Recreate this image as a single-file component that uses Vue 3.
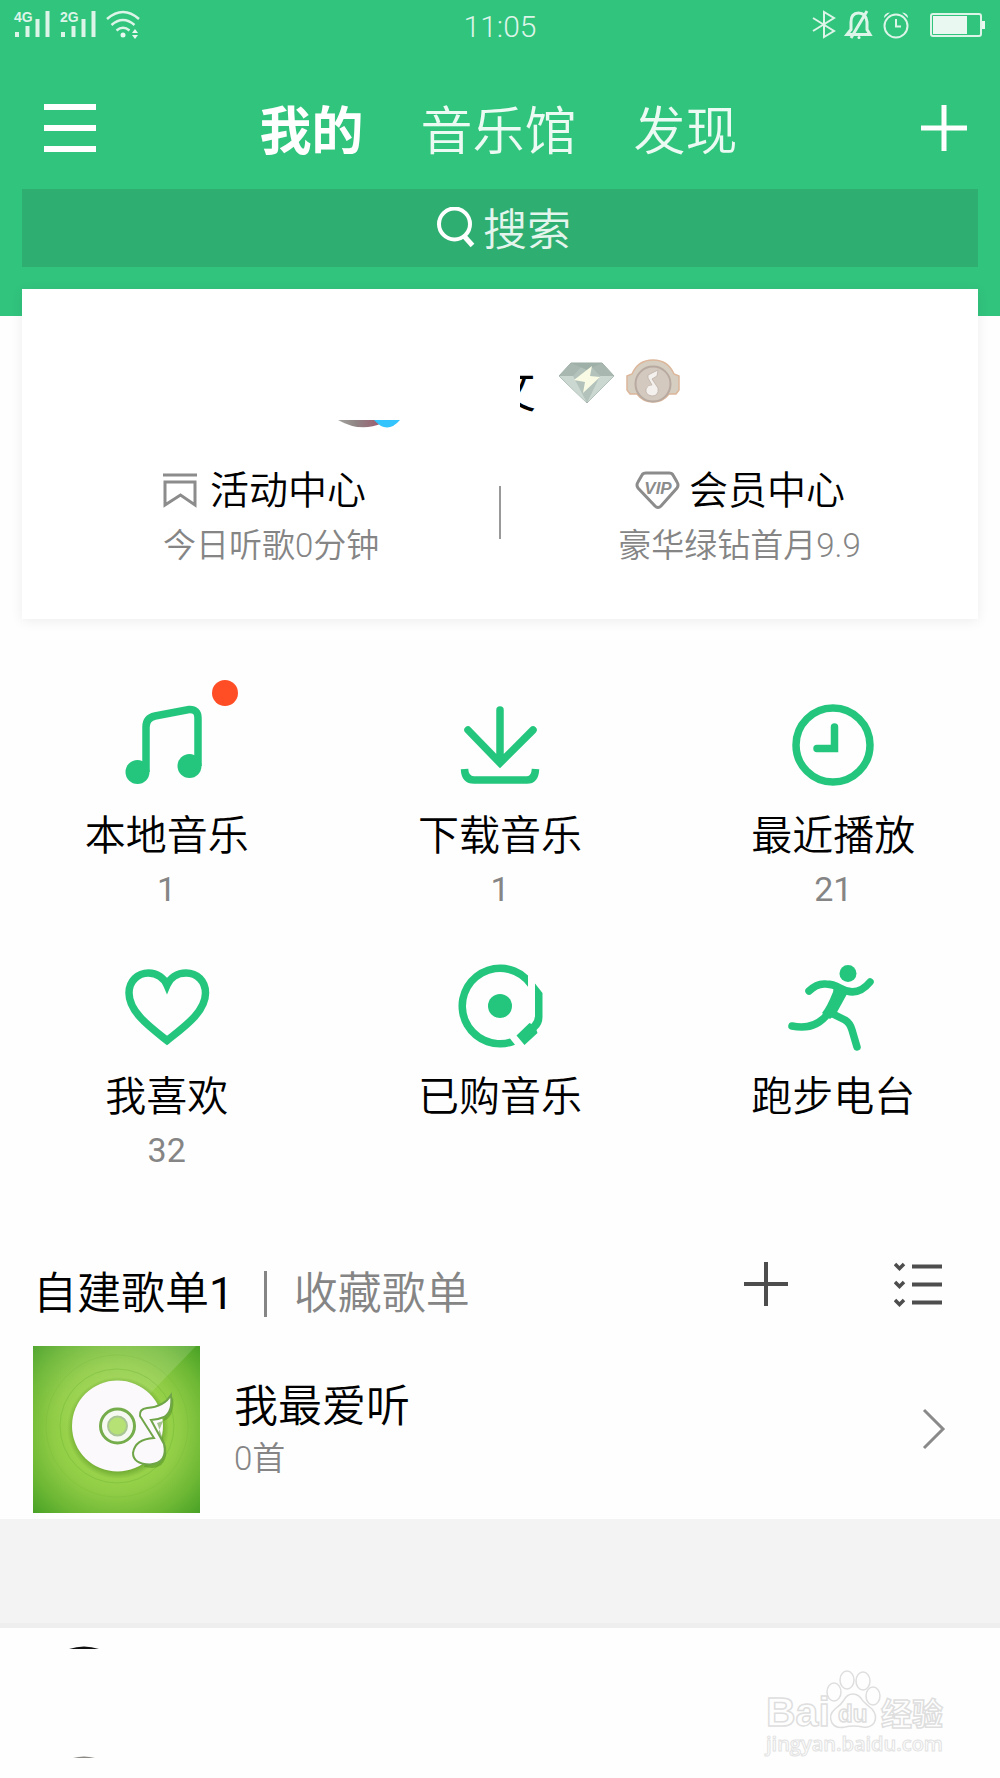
<script setup>
import { ref } from 'vue'

const tabs = ['我的', '音乐馆', '发现']
const activeTab = ref('我的')
const query = ref('')

const entries = [
  { id: 'local', label: '本地音乐', count: '1', dot: true },
  { id: 'download', label: '下载音乐', count: '1' },
  { id: 'recent', label: '最近播放', count: '21' },
  { id: 'like', label: '我喜欢', count: '32' },
  { id: 'bought', label: '已购音乐', count: '' },
  { id: 'run', label: '跑步电台', count: '' },
]

const signals = ['4G', '2G']
</script>

<template>
  <div class="page">
    <header class="top">
      <div class="status">
        <div class="status-side">
          <svg v-for="s in signals" :key="s" class="signal" width="37" height="28" viewBox="0 0 37 28">
            <text x="0" y="11" class="signal-text">{{ s }}</text>
            <path d="M3 21v5M13.500 15v11M23.500 8v18M33.500 0v26" />
          </svg>
          <svg class="wifi" width="36" height="28" viewBox="0 0 36 28">
            <path d="M1 8Q17 -6 33 8M5.500 14Q17 4 28.500 14M10.500 19.500Q17 14 23.500 19.500" />
            <circle cx="17" cy="24" r="2.500" class="solid" />
            <path d="M26 22l3-4 3 4zM26 24l3 4 3-4z" class="solid" />
          </svg>
        </div>
        <time class="clock">11:05</time>
        <div class="status-side status-right">
          <svg width="24" height="28" viewBox="0 0 24 28" class="thin">
            <path d="M1 7l21 13-10 6V1l10 6L1 20" />
          </svg>
          <svg width="28" height="28" viewBox="0 0 28 28" class="bell">
            <path d="M2 23.500h23l-3-5V11Q21 2 13.500 2T6 11v7.500zM22 0L6 27" />
            <circle cx="14" cy="26.500" r="1.500" class="solid" />
          </svg>
          <svg width="28" height="28" viewBox="0 0 28 28" class="thin">
            <circle cx="14" cy="15" r="11.500" />
            <path d="M14 8v7.500h5" />
            <path d="M2 7q0-5 6-5.500zM26 7q0-5-6-5.500z" class="solid" />
          </svg>
          <svg width="56" height="28" viewBox="0 0 56 28" class="thin battery">
            <rect x="1" y="3" width="50" height="22" rx="2" />
            <rect x="3" y="5" width="34" height="18" class="solid" />
            <path d="M52 10h3v8h-3z" class="solid" />
          </svg>
        </div>
      </div>

      <nav class="nav">
        <button class="icon-btn" aria-label="菜单">
          <svg width="52" height="48" viewBox="0 0 52 48"><path d="M0 3h52M0 24h52M0 45h52" stroke="#fff" stroke-width="6" /></svg>
        </button>
        <div class="tabs">
          <button
            v-for="t in tabs"
            :key="t"
            class="tab"
            :class="{ active: t === activeTab }"
            @click="activeTab = t"
          >{{ t }}</button>
        </div>
        <button class="icon-btn" aria-label="添加">
          <svg width="46" height="46" viewBox="0 0 46 46"><path d="M0 23h46M23 0v46" stroke="#fff" stroke-width="5" /></svg>
        </button>
      </nav>

      <label class="search">
        <svg width="38" height="42" viewBox="0 0 38 42" fill="none" stroke="#fff">
          <circle cx="17.500" cy="17" r="15.500" stroke-width="4" />
          <path d="M27 29l8.500 9.500" stroke-width="5" />
        </svg>
        <input v-model="query" type="text" placeholder="搜索" aria-label="搜索" />
      </label>
    </header>

    <section class="card">
      <div class="identity">
        <svg class="avatar" width="62" height="8" viewBox="0 0 62 8">
          <defs>
            <linearGradient id="avatar-fill"><stop offset="0" stop-color="#a3a39f" /><stop offset="0.400" stop-color="#8f8585" /><stop offset="1" stop-color="#9c5a70" /></linearGradient>
          </defs>
          <path d="M0 0h44v3Q23 13 0 0z" fill="url(#avatar-fill)" />
          <path d="M36 0h26q-13 15-26 0z" fill="#33c3fd" />
        </svg>
        <span class="name"><span>攵</span></span>
        <svg class="gem" width="56" height="42" viewBox="0 0 56 42">
          <path d="M0 14L12 1h31l12 13-27 27z" fill="#b3c3bb" stroke="#98aaa1" stroke-width="1" />
          <path d="M12 1L0 14h14L23 4zM43 1l12 13H41L32 4z" fill="#a8b8b0" />
          <path d="M0 14h14l14 27zM41 14h14L28 41z" fill="#cbd8d1" />
          <path d="M12 1h31L28 8z" fill="#9fb0a8" />
          <path d="M33 4L15 18l11 2-2 11 17-16-10-1z" fill="#fafbe4" />
        </svg>
        <svg class="medal" width="54" height="44" viewBox="0 0 54 44">
          <path d="M1 17l5-2Q12 1 27 1t21 14l5 2v14l-3 4h-7Q37 43 27 43T11 35H4l-3-4z" fill="#d6cec1" stroke="#dcb79b" stroke-width="1.500" />
          <circle cx="27" cy="25" r="17.500" fill="#d3c9be" stroke="#b8aaa0" stroke-width="2" />
          <path d="M22 16l10-5-1 6-5 3 6 9q1 8-6 8-7-1-6-7 2-5 6-4l-4-7z" fill="#f3f0ee" stroke="#bfb2a8" stroke-width="0.800" />
        </svg>
      </div>

      <div class="centers">
        <a href="#activity" class="center start">
          <span class="center-title">
            <svg width="38" height="36" viewBox="0 0 38 36" fill="none" stroke="#8c8c8c" stroke-width="3">
              <path d="M0 2h34M2 9h30v23L17.500 22 2 32z" />
            </svg>
            活动中心
          </span>
          <span class="center-sub">今日听歌0分钟</span>
        </a>
        <i class="rule"></i>
        <a href="#vip" class="center">
          <span class="center-title">
            <svg width="46" height="40" viewBox="0 0 46 40" fill="none" stroke="#8c8c8c" stroke-width="3">
              <path d="M12 2h23q3 0 4 2l4 7q2 3 0 6L27 35q-3 3-6 0L4 17q-2-3 0-6l4-7q1-2 4-2z" />
              <text x="24" y="23" text-anchor="middle" class="vip">VIP</text>
            </svg>
            会员中心
          </span>
          <span class="center-sub">豪华绿钻首月9.9</span>
        </a>
      </div>
    </section>

    <section class="grid">
      <button v-for="e in entries" :key="e.id" class="entry">
        <span class="entry-icon">
          <svg v-if="e.id === 'local'" width="84" height="84" viewBox="125 703 84 84" class="line">
            <path d="M146 772V727Q146 718 155 716L189 709.500Q198 709 198 718V766" />
            <circle cx="137.500" cy="772" r="12" class="fill" />
            <circle cx="189.500" cy="766" r="12" class="fill" />
          </svg>
          <svg v-else-if="e.id === 'download'" width="84" height="84" viewBox="458 703 84 84" class="line">
            <path d="M500 710v50M468 730l32 33 33-33" stroke-linecap="round" />
            <path d="M464.500 769Q465 780 474 780H527Q535 780 535.500 769" />
          </svg>
          <svg v-else-if="e.id === 'recent'" width="84" height="84" viewBox="791 703 84 84" class="line">
            <circle cx="833" cy="745" r="37" />
            <path d="M834.500 727v21.500H817" stroke-linecap="round" />
          </svg>
          <svg v-else-if="e.id === 'like'" width="84" height="84" viewBox="125 964 84 84" class="line">
            <path d="M167 1040.500C150 1027 129 1012 129 993 129 981 138 973 148.500 973 157 973 164 978 167 985 170 978 177 973 186 973 197 973 205.500 981 205.500 993 205.500 1012 184 1027 167 1040.500Z" />
          </svg>
          <svg v-else-if="e.id === 'bought'" width="84" height="84" viewBox="458 964 84 84" class="line">
            <path d="M528 986.700A34 34 0 1 0 510 1038.500L515 1044.700A41.500 41.500 0 1 1 528 975.400Z" class="fill" />
            <circle cx="500" cy="1006" r="12" class="fill" />
            <path d="M535 983.500l7.500 9.500v24q0 8-6 13l1 3-13 12-8-9.500 13-12.500 2 1q3.500-4 3.500-8z" class="fill" />
          </svg>
          <svg v-else width="84" height="84" viewBox="791 964 84 84" class="line">
            <circle cx="848" cy="973.500" r="8.500" class="fill" />
            <path d="M809 991Q817 983 826 984 833 984 840 988 857 998 870 982M792 1026Q816 1031 829 1012L845 1020Q850 1023 852 1030L857 1047" stroke-linecap="round" stroke-linejoin="round" />
            <path d="M834 986l13 8-11 20-6 5-8-6q5-6 11-21z" class="fill" />
          </svg>
          <i v-if="e.dot" class="dot"></i>
        </span>
        <span class="entry-label">{{ e.label }}</span>
        <span class="entry-count">{{ e.count }}</span>
      </button>
    </section>

    <section class="lists">
      <div class="lists-head">
        <button class="list-tab current">自建歌单<span class="num">1</span></button>
        <i class="bar"></i>
        <button class="list-tab">收藏歌单</button>
        <div class="actions">
          <button class="icon-btn" aria-label="新建歌单">
            <svg width="44" height="44" viewBox="0 0 44 44"><path d="M0 22h44M22 0v44" stroke="#4d4d4d" stroke-width="4" /></svg>
          </button>
          <button class="icon-btn" aria-label="管理歌单">
            <svg width="48" height="46" viewBox="0 0 48 46" fill="none" stroke="#4d4d4d" stroke-width="4">
              <path d="M18 5.500h30M18 23.500h30M18 41.500h30" />
              <path d="M1 3l4.500 4.500L10 3M1 21l4.500 4.500L10 21M1 39l4.500 4.500L10 39" stroke-width="3.500" />
            </svg>
          </button>
        </div>
      </div>

      <a href="#favourite" class="playlist">
        <svg class="cover" width="167" height="167" viewBox="0 0 167 167">
          <defs>
            <radialGradient id="cover-bg" cx="0.500" cy="0.500" r="0.700">
              <stop offset="0" stop-color="#b2e060" />
              <stop offset="0.300" stop-color="#a0d850" />
              <stop offset="0.550" stop-color="#90cc45" />
              <stop offset="0.800" stop-color="#6cb734" />
              <stop offset="1" stop-color="#4aa226" />
            </radialGradient>
            <linearGradient id="cover-shine" x1="0" y1="1" x2="0.700" y2="0">
              <stop offset="0.400" stop-color="#fff" stop-opacity="0" />
              <stop offset="1" stop-color="#fff" stop-opacity="0.140" />
            </linearGradient>
            <radialGradient id="disc-shadow">
              <stop offset="0.800" stop-color="#3d7a12" stop-opacity="0.600" />
              <stop offset="1" stop-color="#3d7a12" stop-opacity="0" />
            </radialGradient>
          </defs>
          <rect width="167" height="167" fill="url(#cover-bg)" />
          <path d="M0 0h163L80 86 0 167z" fill="url(#cover-shine)" />
          <g fill="none" stroke="#5da82c" stroke-opacity="0.300">
            <circle cx="84" cy="80" r="57" /><circle cx="84" cy="80" r="71" stroke-opacity="0.150" />
          </g>
          <circle cx="85" cy="82" r="51" fill="url(#disc-shadow)" />
          <circle cx="84.500" cy="80" r="45.500" fill="#fbf9fb" />
          <circle cx="84.500" cy="80" r="17" fill="#f6f9f2" stroke="#76ad4c" stroke-width="3" />
          <circle cx="84.500" cy="80" r="9.500" fill="#b6e174" stroke="#a9c596" stroke-width="2" />
          <path d="M140 51Q142 68 133 74l-9 3 9 24q2 20-14 21l-8-1z" fill="#4c8b20" fill-opacity="0.500" />
          <path d="M138 49Q140 66 131 71 124 74 118 74L131 98Q135 117 117 118.500 100 118 100 107 102 93 121 92L107 70Q106 63 114 62 131 61 138 49Z" fill="#fbf9fb" stroke="#6fa548" stroke-width="2" />
        </svg>
        <span class="playlist-text">
          <span class="playlist-title">我最爱听</span>
          <span class="playlist-sub">0首</span>
        </span>
        <svg class="chevron" width="24" height="42" viewBox="0 0 24 42" fill="none" stroke="#8a8a8a" stroke-width="3">
          <path d="M2 2l19 19L2 40" />
        </svg>
      </a>
    </section>

    <div class="spacer"></div>

    <footer class="player">
      <svg class="disc" width="30" height="113" viewBox="0 0 30 113">
        <path d="M0 3q15-5 30 0z" fill="#111" />
        <path d="M4 112q11-3 22 0z" fill="#8c8884" />
      </svg>
      <div class="mark">
        <svg width="180" height="60" viewBox="0 0 180 60" class="mark-logo">
          <text x="0" y="56" class="mark-bai">Bai</text>
          <text x="115" y="55" class="mark-cn">经验</text>
          <ellipse cx="68" cy="22" rx="7" ry="9" />
          <ellipse cx="81" cy="10" rx="7" ry="9" />
          <ellipse cx="97" cy="11" rx="7" ry="9" />
          <ellipse cx="107" cy="26" rx="7" ry="9" />
          <path d="M87 24Q93 24 97 31 101 35 106 39 112 46 108 53 104 58 97 57 87 55 79 57 70 59 66 53 62 45 69 39 75 35 78 30 81 24 87 24Z" />
          <text x="72" y="52" class="mark-du">du</text>
        </svg>
        <span class="mark-url">jingyan.baidu.com</span>
      </div>
    </footer>
  </div>
</template>

<style>
body {
  background: #fefefe;
}
</style>

<style scoped>
.page {
  font-family: Roboto, "Noto Sans CJK SC", sans-serif;
  font-weight: 350;
  color: #000;
  background: #fefefe;
}

button {
  border: 0;
  padding: 0;
  margin: 0;
  background: none;
  font: inherit;
  color: inherit;
  cursor: pointer;
}

a {
  color: inherit;
  text-decoration: none;
}

svg {
  display: block;
  flex: none;
}

.top {
  background: #31c47d;
  color: #fff;
  padding: 0 22px 49px;
}

.status {
  display: flex;
  height: 50px;
  align-items: center;
  margin: 0 -8px;
  color: #dcf5e8;
}

.status-side {
  flex: 1;
  display: flex;
  gap: 9px;
}

.status-right {
  justify-content: flex-end;
}

.status svg {
  fill: none;
  stroke: #dcf5e8;
  overflow: visible;
}

.signal path {
  stroke-width: 4;
}

.signal-text {
  font: bold 14px "Liberation Sans", sans-serif;
  fill: #dcf5e8;
  stroke: none;
}

.wifi path {
  stroke-width: 2.5;
}

.status .thin {
  stroke-width: 2;
}

.status .bell {
  stroke-width: 3;
}

.battery {
  margin-left: 11px;
}

.status .solid {
  fill: #e9f8f0;
  stroke: none;
}

.clock {
  padding-top: 4px;
  font-size: 30px;
  line-height: 46px;
}

.nav {
  display: flex;
  align-items: center;
  justify-content: space-between;
  height: 104px;
  padding: 26px 11px 9px 22px;
}

.icon-btn {
  line-height: 0;
}

.tabs {
  display: flex;
  gap: 57px;
  margin-right: 20px;
  padding-top: 10px;
}

.tab {
  font-size: 52px;
  line-height: 60px;
  color: #ebfaf2;
}

.tab.active {
  font-weight: 700;
  color: #fff;
}

.search {
  display: flex;
  align-items: center;
  justify-content: center;
  gap: 8px;
  height: 78px;
  padding-left: 8px;
  background: #2eae70;
}

.search input {
  box-sizing: border-box;
  width: 88px;
  height: 66px;
  padding: 6px 0 0;
  border: 0;
  outline: 0;
  background: none;
  font: inherit;
  font-size: 44px;
  color: #fff;
}

.search input::placeholder {
  color: #e3f5ec;
  opacity: 1;
}

.card {
  position: relative;
  margin: -27px 22px 0;
  padding: 60px 0 53px;
  background: #fff;
  box-shadow: 0 2px 12px rgba(0, 0, 0, 0.07);
}

.identity {
  display: flex;
  justify-content: center;
  align-items: flex-start;
  height: 79px;
  padding-left: 18px;
}

.avatar {
  align-self: flex-end;
  margin-right: 120px;
}

.name {
  display: flex;
  justify-content: flex-end;
  width: 16px;
  margin: 12px 23px 0 0;
  overflow: hidden;
  font-size: 48px;
  line-height: 60px;
}

.gem {
  margin: 13px 11px 0 0;
}

.medal {
  margin-top: 10px;
}

.centers {
  display: grid;
  grid-template-columns: 1fr 2px 1fr;
  margin-top: 43px;
}

.center {
  display: flex;
  flex-direction: column;
  align-items: center;
  gap: 15px;
}

.center.start {
  align-items: flex-start;
  padding-left: 141px;
}

.center-title {
  display: flex;
  align-items: center;
  gap: 9px;
  font-size: 39px;
  line-height: 40px;
}

.center-sub {
  font-size: 33px;
  line-height: 40px;
  color: #858585;
}

.vip {
  font: italic bold 17px "Liberation Sans", sans-serif;
  fill: #8c8c8c;
  stroke: none;
}

.rule {
  height: 53px;
  margin-top: 15px;
  background: #999;
}

.grid {
  display: grid;
  grid-template-columns: repeat(3, 1fr);
  row-gap: 55px;
  margin-top: 84px;
}

.entry {
  display: flex;
  flex-direction: column;
  align-items: center;
}

.entry-icon {
  position: relative;
  height: 84px;
}

.entry-icon svg {
  overflow: visible;
}

.line {
  fill: none;
  stroke: #24c67e;
  stroke-width: 7.5;
}

.line .fill {
  fill: #24c67e;
  stroke: none;
}

.dot {
  position: absolute;
  top: -23px;
  right: -29px;
  width: 26px;
  height: 26px;
  border-radius: 50%;
  background: #ff4e26;
}

.entry-label {
  margin-top: 25px;
  font-size: 41px;
  line-height: 48px;
}

.entry-count {
  height: 40px;
  margin-top: 9px;
  font-size: 34px;
  line-height: 40px;
  font-weight: 400;
  color: #858585;
}

.lists {
  margin-top: 91px;
  padding: 0 54px 6px 33px;
}

.lists-head {
  display: flex;
  align-items: flex-start;
  height: 66px;
}

.list-tab {
  font-size: 44px;
  line-height: 66px;
  color: #858585;
}

.list-tab.current {
  color: #000;
}

.num {
  font-weight: 400;
}

.bar {
  width: 3px;
  height: 46px;
  margin: 10px 27px 0 30px;
  background: #858585;
}

.actions {
  display: flex;
  gap: 106px;
  margin-left: auto;
  padding-right: 4px;
}

.playlist {
  display: flex;
  align-items: center;
  margin-top: 19px;
}

.playlist-text {
  flex: 1;
  display: flex;
  flex-direction: column;
  margin: 0 0 2px 34px;
}

.playlist-title {
  font-size: 44px;
  line-height: 60px;
}

.playlist-sub {
  font-size: 33px;
  line-height: 44px;
  color: #858585;
}

.chevron {
  margin-bottom: 2px;
}

.spacer {
  height: 104px;
  background: #f3f3f3;
  border-bottom: 5px solid #eee;
}

.player {
  display: flex;
  align-items: flex-start;
  justify-content: space-between;
  height: 149px;
  padding: 0 54px 0 69px;
}

.disc {
  margin-top: 18px;
}

.mark {
  display: flex;
  flex-direction: column;
  width: 180px;
  margin-top: 42px;
}

.mark-logo {
  overflow: visible;
  fill: #fefefe;
  stroke: #dedede;
  stroke-width: 1.5;
}

.mark-bai {
  font: bold 41px "Liberation Sans", sans-serif;
}

.mark-cn {
  font: bold 31px "Noto Sans CJK SC", sans-serif;
}

.mark-du {
  font: bold 24px "Liberation Sans", sans-serif;
}

.mark-url {
  margin-top: 1px;
  font: 600 20px/26px "Open Sans", sans-serif;
  color: #fefefe;
  -webkit-text-stroke: 1px #e2e2e2;
}
</style>
